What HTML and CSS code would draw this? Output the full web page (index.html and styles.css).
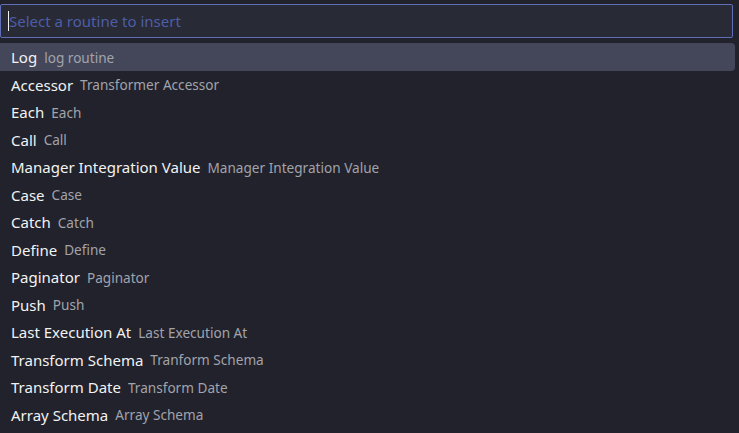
FILE: index.html
```html
<!DOCTYPE html>
<html>
<head>
<meta charset="utf-8">
<link rel="stylesheet" href="styles.css">
</head>
<body>
<div class="picker">
  <div class="search">
    <span class="caret"></span>
    <span class="placeholder">Select a routine to insert</span>
  </div>
  <ul class="list">
    <li class="item active"><span class="name">Log</span><span class="desc">log routine</span></li>
    <li class="item"><span class="name">Accessor</span><span class="desc">Transformer Accessor</span></li>
    <li class="item"><span class="name">Each</span><span class="desc">Each</span></li>
    <li class="item"><span class="name">Call</span><span class="desc">Call</span></li>
    <li class="item"><span class="name">Manager Integration Value</span><span class="desc">Manager Integration Value</span></li>
    <li class="item"><span class="name">Case</span><span class="desc">Case</span></li>
    <li class="item"><span class="name">Catch</span><span class="desc">Catch</span></li>
    <li class="item"><span class="name">Define</span><span class="desc">Define</span></li>
    <li class="item"><span class="name">Paginator</span><span class="desc">Paginator</span></li>
    <li class="item"><span class="name">Push</span><span class="desc">Push</span></li>
    <li class="item"><span class="name">Last Execution At</span><span class="desc">Last Execution At</span></li>
    <li class="item"><span class="name">Transform Schema</span><span class="desc">Tranform Schema</span></li>
    <li class="item"><span class="name">Transform Date</span><span class="desc">Transform Date</span></li>
    <li class="item"><span class="name">Array Schema</span><span class="desc">Array Schema</span></li>
  </ul>
</div>
</body>
</html>
```
FILE: styles.css
```css
html, body {
  margin: 0;
  padding: 0;
  background: #21222c;
  height: 100%;
  overflow: hidden;
}
body {
  font-family: "Noto Sans", "Open Sans", sans-serif;
}
.picker {
  width: 735px;
  padding-top: 4px;
}
.search {
  width: 733px;
  height: 34px;
  box-sizing: border-box;
  border: 1px solid #5f6fb8;
  border-radius: 2px;
  background: #282a36;
  display: flex;
  align-items: center;
  padding-left: 7px;
}
.caret {
  width: 1px;
  height: 20px;
  background: #f0f0f0;
}
.placeholder {
  color: #4e5ea6;
  font-size: 15px;
}
.list {
  list-style: none;
  margin: 5px 0 0 0;
  padding: 0;
}
.item {
  height: 27.5px;
  display: flex;
  align-items: center;
  padding-left: 11px;
  gap: 7px;
  border-radius: 0 4px 4px 0;
}
.item.active {
  height: 28px;
  background: #44475a;
}
.name {
  color: #f2f2f2;
  font-size: 15px;
}
.desc {
  color: #a2a3ab;
  font-size: 13.6px;
}
```
